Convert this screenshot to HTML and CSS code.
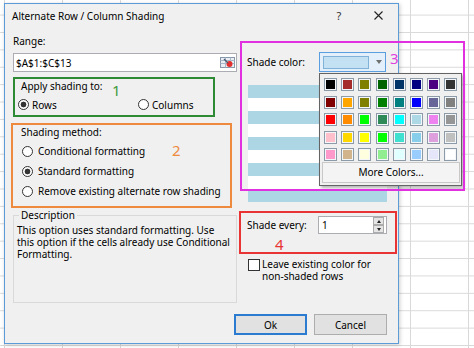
FILE: index.html
```html
<!DOCTYPE html>
<html>
<head>
<meta charset="utf-8">
<title>Alternate Row / Column Shading</title>
<link rel="stylesheet" href="styles.css">
</head>

<body>
<div class="dialog">
	<div class="titlebar">
		<span class="title">Alternate Row / Column Shading</span>
		<span class="help">?</span>
		<span class="close"><svg width="9" height="9" viewBox="0 0 9 9"><path d="M0.5 0.5L8.5 8.5M8.5 0.5L0.5 8.5" stroke="#222" stroke-width="1.1" fill="none"/></svg></span>
	</div>
	<div class="content">
		<div class="col-left">
			<div class="field-label">Range:</div>
			<div class="range-input">
				<span>$A$1:$C$13</span>
				<span class="pick">
					<svg width="15" height="13" viewBox="0 0 15 13">
						<rect x="0.5" y="1.5" width="14" height="10" fill="#e9eef4" stroke="#8898aa"/>
						<path d="M0.5 4.5H14.5M0.5 7.5H14.5M5.5 1.5V11.5M10.5 1.5V11.5" stroke="#a9b7c6" fill="none"/>
						<circle cx="9.5" cy="8" r="3" fill="#e23030"/>
						<path d="M4 3L8 7" stroke="#4a5a70" stroke-width="1.2"/>
					</svg>
				</span>
			</div>
			<div class="group green">
				<div class="group-title">Apply shading to:</div>
				<div class="choices">
					<label class="radio checked">Rows</label>
					<label class="radio">Columns</label>
				</div>
				<span class="num">1</span>
			</div>
			<div class="group orange">
				<div class="group-title">Shading method:</div>
				<div class="options">
					<label class="radio">Conditional formatting</label>
					<label class="radio checked">Standard formatting</label>
					<label class="radio">Remove existing alternate row shading</label>
				</div>
				<span class="num">2</span>
			</div>
			<fieldset class="desc">
				<legend>Description</legend>
				<p>This option uses standard formatting. Use this option if the cells already use Conditional Formatting.</p>
			</fieldset>
		</div>
		<div class="col-right">
			<div class="shade-row">
				<span class="field-label">Shade color:</span>
				<div class="dropdown">
					<span class="current"></span>
					<span class="arrow"></span>
				</div>
				<span class="num">3</span>
				<div class="palette">
					<div class="swatches" id="swatches"></div>
					<div class="more">More Colors...</div>
				</div>
			</div>
			<div class="preview" id="preview"></div>
			<div class="group red">
				<div class="every">
					<span class="field-label">Shade every:</span>
					<div class="spin">
						<span>1</span>
						<span class="spin-btns"><span class="up"></span><span class="down"></span></span>
					</div>
				</div>
				<span class="num">4</span>
			</div>
			<label class="check"><span class="box"></span><span class="check-text">Leave existing color for non-shaded rows</span></label>
			<div class="mark"></div>
		</div>
	</div>
	<div class="footer">
		<button class="ok">Ok</button>
		<button>Cancel</button>
	</div>
</div>
<script>
var colors = [
	'#000000', '#a52a2a', '#808000', '#006400', '#003366', '#000080', '#4b0082', '#333333',
	'#800000', '#ffa500', '#808000', '#008000', '#008080', '#0000ff', '#666699', '#808080',
	'#ff0000', '#ff8c00', '#00ff00', '#2e8b57', '#00ffff', '#add8e6', '#ee82ee', '#969696',
	'#ffc0cb', '#ffd700', '#ffff00', '#00ff00', '#40e0d0', '#87ceeb', '#dda0dd', '#c0c0c0',
	'#ff99cc', '#d2b48c', '#ffffe0', '#90ee90', '#e0ffff', '#99ccff', '#e6e6fa', '#ffffff'
];

//色票
var swatches = document.querySelector('#swatches');
colors.forEach(function(c) {
	var s = document.createElement('span');
	s.classList.add('swatch');
	s.style.background = c;
	swatches.append(s);
});

//預覽條紋
var preview = document.querySelector('#preview');
for(var i = 0; i < 9; i++) {
	var row = document.createElement('div');
	row.classList.add('stripe');
	if(i % 2 == 0) row.classList.add('shaded');
	preview.append(row);
}
</script>
</body>
</html>
```

FILE: styles.css
```css
html, body {
	margin: 0px;
	padding: 0px;
}
body {
	width: 474px;
	height: 348px;
	overflow: hidden;
	font-family: "Noto Sans", "Open Sans", sans-serif;
	font-size: 10px;
	color: #000;
	background-color: #fff;
	background-image: linear-gradient(to right, #d9d9d9 1px, transparent 1px), linear-gradient(to bottom, #d9d9d9 1px, transparent 1px);
	background-size: 58px 100%, 100% 17.4px;
	background-position: 4px 0, 0 14.6px;
}
.dialog {
	margin: 3px 0 0 4px;
	width: 395px;
	height: 341px;
	box-sizing: border-box;
	border: 1px solid #5a9bd8;
	background: #f0f0f0;
	box-shadow: 1px 1px 4px rgba(0,0,0,0.2);
	display: flex;
	flex-direction: column;
}
.titlebar {
	height: 29px;
	box-sizing: border-box;
	padding: 5px 0 0 7px;
	display: flex;
	line-height: 14px;
}
.title {
	flex: 1;
}
.help {
	width: 10px;
	text-align: center;
	font-size: 11px;
	color: #333;
}
.close {
	margin: 2px 15px 0 30px;
	width: 9px;
	height: 9px;
}
.close svg {
	display: block;
}
.content {
	display: grid;
	grid-template-columns: 224px 157px;
	column-gap: 3px;
	padding-left: 8px;
}
.field-label {
	line-height: 16px;
}
.range-input {
	margin-top: 4px;
	height: 19px;
	box-sizing: border-box;
	border: 1px solid #abadb3;
	background: #fff;
	display: flex;
	align-items: center;
	padding-left: 2px;
}
.pick {
	margin-left: auto;
	margin-right: 1px;
	height: 13px;
}
.pick svg {
	display: block;
}
.group {
	position: relative;
	box-sizing: border-box;
	border: 2px solid;
}
.group-title {
	line-height: 14px;
}
.num {
	position: absolute;
	font-size: 15px;
	line-height: 15px;
}
.radio {
	display: flex;
	align-items: center;
}
.radio::before {
	content: "";
	width: 11px;
	height: 11px;
	box-sizing: border-box;
	border: 1px solid #333;
	border-radius: 50%;
	background: #fff;
}
.radio.checked::before {
	background: radial-gradient(circle, #333 2.6px, #fff 3.2px);
}
.green {
	margin-top: 5px;
	width: 202px;
	height: 40px;
	border-color: #2f8a36;
}
.green .group-title {
	padding-left: 6px;
}
.green .choices {
	margin-top: 4px;
	height: 15px;
	display: grid;
	grid-template-columns: 120px auto;
	padding-left: 3px;
}
.green .radio::before {
	margin-right: 3px;
}
.green .num {
	left: 97px;
	top: 4px;
	color: #3d9a3d;
}
.orange {
	margin: 6px 0 0 -2px;
	width: 221px;
	height: 85px;
	border-color: #ee8a3e;
}
.orange .group-title {
	padding-left: 8px;
}
.options {
	margin-top: 2px;
	padding-left: 9px;
}
.options .radio {
	height: 20px;
}
.options .radio::before {
	margin-right: 5px;
}
.orange .num {
	left: 159px;
	top: 18px;
	color: #ee8a3e;
}
.desc {
	margin: 0;
	padding: 0 0 0 3px;
	min-width: 0;
	border: 1px solid #d9d9d9;
}
.desc legend {
	margin-left: 2px;
	padding: 0 2px;
	line-height: 14px;
}
.desc p {
	margin: 2px 0 0 0;
	padding-right: 2px;
	height: 78px;
	line-height: 12px;
}
.col-right {
	position: relative;
}
.shade-row {
	position: relative;
	margin-top: 19px;
	height: 20px;
	padding-left: 7px;
	display: flex;
	align-items: center;
}
.shade-row .field-label {
	width: 72px;
}
.dropdown {
	width: 67px;
	height: 20px;
	box-sizing: border-box;
	border: 1px solid #5a9ee0;
	background: #e3f0fb;
	display: flex;
	align-items: center;
	padding-left: 3px;
}
.current {
	width: 46px;
	height: 13px;
	box-sizing: border-box;
	border: 1px solid #7fb2d6;
	background: #c4e1f3;
}
.arrow {
	margin-left: 7px;
	border-left: 3.5px solid transparent;
	border-right: 3.5px solid transparent;
	border-top: 4px solid #707070;
}
.shade-row .num {
	left: 150px;
	top: -1px;
	color: #e040e0;
}
.palette {
	position: absolute;
	left: 79px;
	top: 21px;
	width: 143px;
	height: 113px;
	box-sizing: border-box;
	border: 1px solid #646464;
	background: #f0f0f0;
	box-shadow: 2px 2px 3px rgba(0,0,0,0.3);
	padding: 4px 0 0 4px;
	z-index: 1;
}
.swatches {
	display: grid;
	grid-template-columns: repeat(8, 13px);
	grid-auto-rows: 13px;
	column-gap: 4.2px;
	row-gap: 4.5px;
}
.swatch {
	box-sizing: border-box;
	border: 1px solid #8d9aa8;
	box-shadow: inset 0 0 0 1px #f4f7fa;
}
.more {
	margin: 1px 1px 0 -2px;
	height: 21px;
	box-sizing: border-box;
	border: 1px solid #c8c8c8;
	background: #f4f4f4;
	text-align: center;
	line-height: 19px;
}
.preview {
	margin: 13px 0 0 8px;
	width: 139px;
}
.stripe {
	height: 13px;
	background: #fff;
}
.stripe.shaded {
	background: #add6e4;
}
.red {
	margin: 9px 0 0 -1px;
	width: 158px;
	height: 43px;
	border-color: #e83434;
	padding: 3px 0 0 6px;
}
.every {
	display: flex;
	align-items: center;
	height: 18px;
}
.every .field-label {
	width: 71px;
}
.spin {
	width: 69px;
	height: 18px;
	box-sizing: border-box;
	border: 1px solid #abadb3;
	background: #fff;
	display: flex;
	align-items: center;
	padding-left: 3px;
}
.spin-btns {
	margin: 0 2px 0 auto;
	width: 11px;
	display: flex;
	flex-direction: column;
}
.spin-btns span {
	height: 8px;
	box-sizing: border-box;
	border: 1px solid #acacac;
	background: #e5e5e5;
	display: flex;
	justify-content: center;
	align-items: center;
}
.spin-btns .up::after {
	content: "";
	border-left: 2.5px solid transparent;
	border-right: 2.5px solid transparent;
	border-bottom: 3px solid #222;
}
.spin-btns .down::after {
	content: "";
	border-left: 2.5px solid transparent;
	border-right: 2.5px solid transparent;
	border-top: 3px solid #222;
}
.red .num {
	left: 34px;
	top: 24px;
	color: #e83434;
}
.check {
	margin-top: 4px;
	padding-left: 8px;
	display: flex;
	align-items: flex-start;
	line-height: 12px;
}
.check .box {
	margin: 1px 2px 0 0;
	width: 12px;
	height: 12px;
	box-sizing: border-box;
	border: 1px solid #333;
	background: #fff;
}
.check-text {
	width: 122px;
}
.mark {
	position: absolute;
	left: 0;
	top: 8px;
	width: 225px;
	height: 150px;
	box-sizing: border-box;
	border: 2px solid #e030e0;
	z-index: 2;
	pointer-events: none;
}
.footer {
	margin-top: 11px;
	padding-right: 11px;
	display: flex;
	justify-content: flex-end;
	gap: 7px;
}
button {
	width: 73px;
	height: 21px;
	box-sizing: border-box;
	border: 1px solid #adadad;
	background: #e1e1e1;
	font-family: inherit;
	font-size: 10px;
	color: #000;
	padding: 0;
}
button.ok {
	border-color: #2b7bd1;
	box-shadow: inset 0 0 0 1px #2b7bd1;
}
```
